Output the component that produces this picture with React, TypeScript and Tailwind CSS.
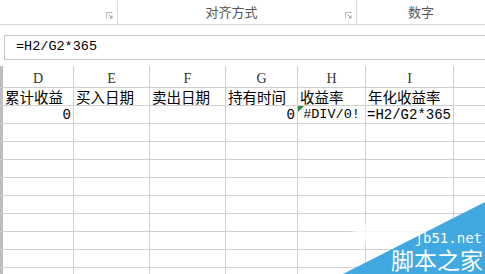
import { Fragment } from 'react'

const cols = [
  { key: 'D', width: 'w-[71px]' },
  { key: 'E', width: 'w-[76px]' },
  { key: 'F', width: 'w-[76px]' },
  { key: 'G', width: 'w-[72px]' },
  { key: 'H', width: 'w-[68px]' },
  { key: 'I', width: 'w-[88px]' },
]

const labels = ['累计收益', '买入日期', '卖出日期', '持有时间', '收益率', '年化收益率']

const cjk = "font-['Noto_Sans_CJK_SC',sans-serif]"
const mono = "font-['Liberation_Mono',monospace]"

function Launcher() {
  return (
    <svg width="7" height="7" viewBox="0 0 7 7" className="mb-[5px] mr-[4px] self-end">
      <path d="M0.5 6.5V0.5H6.5" fill="none" stroke="#b5b5b5" strokeWidth="1" />
      <path d="M2.5 2.5L6 6M6 3.5V6H3.5" fill="none" stroke="#9a9a9a" strokeWidth="1" />
    </svg>
  )
}

function Ribbon() {
  return (
    <div className={`flex h-[25px] border-b border-[#d6d6d6] bg-white text-[13px] text-[#555] ${cjk}`}>
      <div className="flex w-[118px] justify-end border-r border-[#dcdcdc]">
        <Launcher />
      </div>
      <div className="flex w-[239px] border-r border-[#dcdcdc]">
        <span className="flex-1 pt-[4px] text-center leading-[16px]">对齐方式</span>
        <Launcher />
      </div>
      <div className="flex-1 pt-[4px] text-center leading-[16px]">数字</div>
    </div>
  )
}

function FormulaBar() {
  return (
    <div className="bg-white pl-[4px] pt-[10px] pb-[5px]">
      <div className={`flex h-[25px] items-center border border-r-0 border-[#c8c8c8] pl-[11px] text-[13.5px] text-black ${mono}`}>
        =H2/G2*365
      </div>
    </div>
  )
}

function Row({ children, header }: { children: React.ReactNode; header?: boolean }) {
  return (
    <div className={`flex ${header ? 'h-[22px]' : 'h-[18px]'} border-b border-[#cfcfcf]`}>
      <div className="w-[3px] bg-[#bdbdbd]" />
      {children}
    </div>
  )
}

export default function App() {
  const empty = Array.from({ length: 9 })

  return (
    <div className="relative h-[274px] w-[485px] overflow-hidden bg-white">
      <Ribbon />
      <FormulaBar />

      <div className="mt-[1px]">
        <Row header>
          {cols.map((c) => (
            <div
              key={c.key}
              className={`${c.width} flex items-center justify-center border-r border-[#cfcfcf] pt-[3px] font-['Liberation_Serif',serif] text-[14px] text-[#333]`}
            >
              {c.key}
            </div>
          ))}
          <div className="flex-1" />
        </Row>

        <Row>
          {cols.map((c, i) => (
            <div
              key={c.key}
              className={`${c.width} flex items-center overflow-visible whitespace-nowrap border-r border-[#cfcfcf] pl-[2px] text-[14.5px] leading-[18px] text-black ${cjk}`}
            >
              {labels[i]}
            </div>
          ))}
          <div className="flex-1" />
        </Row>

        <Row>
          <div className={`w-[71px] border-r border-[#cfcfcf] pr-[2px] text-right text-[14px] leading-[18px] ${mono}`}>0</div>
          <div className="w-[76px] border-r border-[#cfcfcf]" />
          <div className="w-[76px] border-r border-[#cfcfcf]" />
          <div className={`w-[72px] border-r border-[#cfcfcf] pr-[2px] text-right text-[14px] leading-[18px] ${mono}`}>0</div>
          <div className={`relative w-[68px] border-r border-[#cfcfcf] text-center text-[13.5px] leading-[18px] ${mono}`}>
            <span className="absolute left-0 top-0 h-0 w-0 border-r-[6px] border-t-[6px] border-r-transparent border-t-[#208a3c]" />
            #DIV/0!
          </div>
          <div className={`w-[88px] whitespace-nowrap border-r border-[#cfcfcf] pl-[1px] text-[14px] leading-[18px] ${mono}`}>
            =H2/G2*365
          </div>
          <div className="flex-1" />
        </Row>

        {empty.map((_, r) => (
          <Fragment key={r}>
            <Row>
              {cols.map((c) => (
                <div key={c.key} className={`${c.width} border-r border-[#cfcfcf]`} />
              ))}
              <div className="flex-1" />
            </Row>
          </Fragment>
        ))}
      </div>

      {/* watermark */}
      <div className="pointer-events-none absolute bottom-0 right-0 h-[72px] w-[142px]">
        <div className="absolute bottom-[30px] left-[10px] h-[20px] w-[80px] bg-white/80 blur-[2px]" />
        <svg width="142" height="72" viewBox="0 0 142 72" className="absolute inset-0">
          <polygon points="0,72 142,0 142,72" fill="#3fa9e0" />
        </svg>
        <div className="absolute right-[3px] top-[29px] font-['DejaVu_Sans_Mono',monospace] text-[14px] leading-[14px] text-white">
          jb51.net
        </div>
        <div className={`absolute right-[2px] top-[45px] text-[23px] leading-[24px] text-white ${cjk}`}>
          脚本之家
        </div>
      </div>
    </div>
  )
}
